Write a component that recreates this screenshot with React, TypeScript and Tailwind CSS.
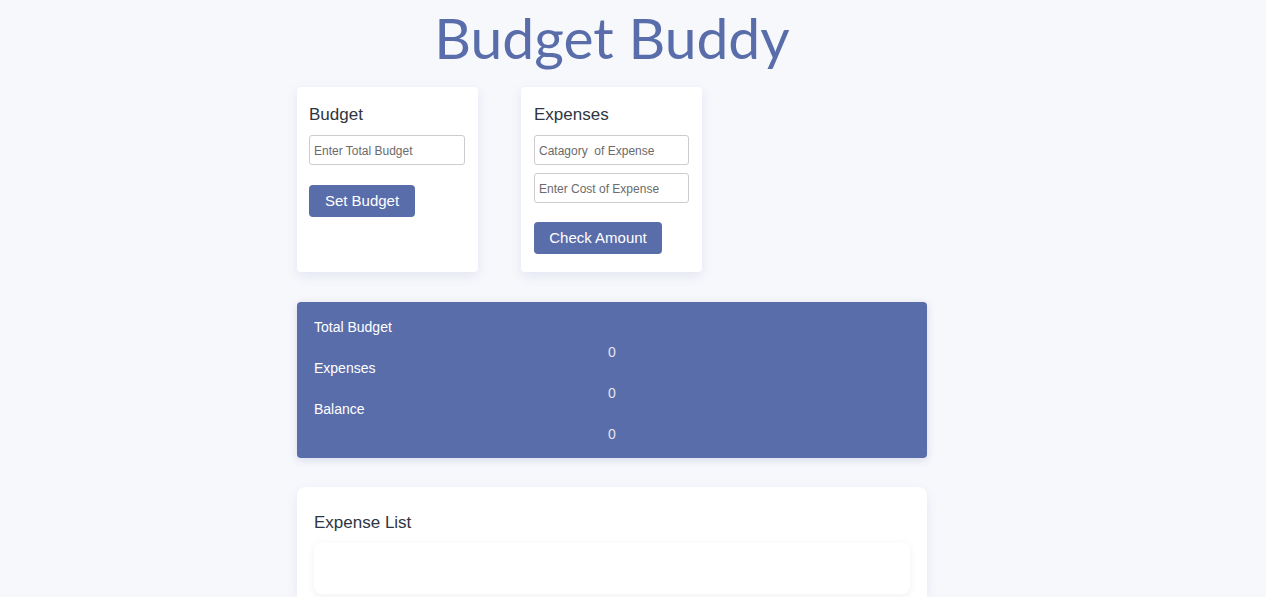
import React from "react";

const sans = { fontFamily: '"Liberation Sans", Arial, sans-serif' };

function Field({ placeholder }: { placeholder: string }) {
  return (
    <input
      type="text"
      placeholder={placeholder}
      className="block w-full h-[30px] px-[4px] pt-[1px] border border-[#cccccc] rounded-[3px] text-[12px] text-[#333] placeholder:text-[#6b6b6b] bg-white outline-none"
    />
  );
}

function Stat({ label, value }: { label: string; value: number }) {
  return (
    <div>
      <p className="text-[14px] leading-[16px] text-white">{label}</p>
      <p className="mt-[9px] text-[14px] leading-[16px] text-[#e4e6f0] text-center">{value}</p>
    </div>
  );
}

export default function App() {
  return (
    <div className="h-[597px] overflow-hidden bg-[#f7f8fc]" style={sans}>
      <div className="w-[630px] ml-[297px]">
        <h1
          className="text-center text-[#5a6dab] text-[57px] leading-[76px] -mt-[1px]"
          style={{ fontFamily: 'Lato, "Open Sans", sans-serif' }}
        >
          Budget Buddy
        </h1>

        <div className="flex gap-[43px] mt-[12px]">
          <div className="w-[181px] h-[185px] bg-white rounded-[4px] shadow-[0_4px_12px_rgba(90,100,160,0.12)] px-[12px] pt-[17px]">
            <h2 className="text-[17px] leading-[22px] text-[#2f3542]">Budget</h2>
            <div className="mt-[9px] w-[156px]">
              <Field placeholder="Enter Total Budget" />
            </div>
            <button className="mt-[20px] w-[106px] h-[32px] pt-[1px] bg-[#5a6dab] text-white text-[15px] rounded-[4px]">
              Set Budget
            </button>
          </div>

          <div className="w-[181px] h-[185px] bg-white rounded-[4px] shadow-[0_4px_12px_rgba(90,100,160,0.12)] px-[13px] pt-[17px]">
            <h2 className="text-[17px] leading-[22px] text-[#2f3542]">Expenses</h2>
            <div className="mt-[9px] w-[155px] flex flex-col gap-[8px]">
              <Field placeholder="Catagory  of Expense" />
              <Field placeholder="Enter Cost of Expense" />
            </div>
            <button className="mt-[19px] w-[128px] h-[32px] pt-[1px] bg-[#5a6dab] text-white text-[15px] rounded-[4px]">
              Check Amount
            </button>
          </div>
        </div>

        <div className="mt-[30px] h-[156px] bg-[#5a6dab] rounded-[4px] shadow-[0_2px_8px_rgba(90,100,160,0.2)] px-[17px] pt-[17px]">
          <Stat label="Total Budget" value={0} />
          <Stat label="Expenses" value={0} />
          <Stat label="Balance" value={0} />
        </div>

        <div className="mt-[29px] h-[110px] bg-white rounded-t-[8px] shadow-[0_4px_12px_rgba(90,100,160,0.1)] px-[17px] pt-[25px]">
          <h2 className="text-[17px] leading-[22px] text-[#2f3542]">Expense List</h2>
          <div className="mt-[9px] h-[51px] bg-white rounded-[8px] shadow-[0_2px_10px_rgba(0,0,0,0.06)]" />
        </div>
      </div>
    </div>
  );
}
